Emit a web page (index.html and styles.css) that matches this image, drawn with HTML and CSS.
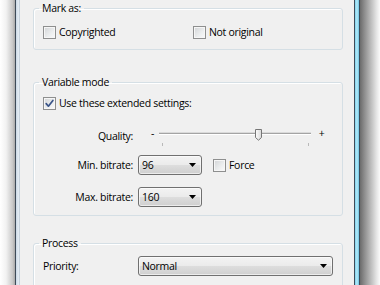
FILE: index.html
```html
<!DOCTYPE html>
<html lang="en">
<head>
<meta charset="utf-8">
<title>Encoder settings</title>
<link rel="stylesheet" href="styles.css">
</head>
<body>
<div class="screen">
  <div class="shadow-left"></div>
  <div class="edge-dark"></div>
  <div class="frame-left"></div>
  <main class="client">
    <fieldset class="group g-mark">
      <legend>Mark as:</legend>
      <div class="mark-row">
        <label class="check col-a"><span class="cb"></span>Copyrighted</label>
        <label class="check"><span class="cb"></span>Not original</label>
      </div>
    </fieldset>

    <fieldset class="group g-var">
      <legend>Variable mode</legend>
      <label class="check ext"><span class="cb"><svg class="tick" width="11" height="11" viewBox="0 0 11 11"><path d="M2.2 5.6 L4.4 8.2 L8.9 2.4" fill="none" stroke="#3a5488" stroke-width="1.7" stroke-linecap="round" stroke-linejoin="round"/></svg></span>Use these extended settings:</label>

      <div class="row r-quality">
        <span class="lbl">Quality:</span>
        <div class="slider">
          <span class="minus">-</span>
          <div class="track">
            <span class="tickmark t-start"></span>
            <span class="tickmark t-end"></span>
            <svg class="thumb" width="7" height="12" viewBox="0 0 7 12"><defs><linearGradient id="tg" x1="0" y1="0" x2="1" y2="0"><stop offset="0" stop-color="#fdfdfd"/><stop offset="1" stop-color="#d8d8d8"/></linearGradient></defs><path d="M0.5 0.5 H6.5 V8.5 L3.5 11.2 L0.5 8.5 Z" fill="url(#tg)" stroke="#767676"/></svg>
          </div>
          <span class="plus">+</span>
        </div>
      </div>

      <div class="row r-min">
        <span class="lbl">Min. bitrate:</span>
        <div class="combo c-small"><span>96</span><svg class="arrow" width="7" height="4" viewBox="0 0 7 4"><path d="M0 0H7L3.5 4Z" fill="#000"/></svg></div>
        <label class="check force"><span class="cb"></span>Force</label>
      </div>

      <div class="row r-max">
        <span class="lbl">Max. bitrate:</span>
        <div class="combo c-small"><span>160</span><svg class="arrow" width="7" height="4" viewBox="0 0 7 4"><path d="M0 0H7L3.5 4Z" fill="#000"/></svg></div>
      </div>
    </fieldset>

    <fieldset class="group g-proc">
      <legend>Process</legend>
      <div class="row r-prio">
        <span class="lbl lbl-left">Priority:</span>
        <div class="combo c-wide"><span>Normal</span><svg class="arrow" width="7" height="4" viewBox="0 0 7 4"><path d="M0 0H7L3.5 4Z" fill="#000"/></svg></div>
      </div>
    </fieldset>
  </main>
  <div class="edge-dark"></div>
  <div class="frame-right"></div>
  <div class="edge-dark"></div>
  <div class="shadow-right"></div>
</div>
</body>
</html>
```
FILE: styles.css
```css
html, body {
  margin: 0;
  padding: 0;
  height: 100%;
  overflow: hidden;
  background: #ffffff;
}

body {
  font-family: "Open Sans", "Noto Sans", sans-serif;
  font-size: 10.5px;
  line-height: 14px;
  letter-spacing: -0.3px;
  color: #000;
}

.screen {
  display: flex;
  height: 285px;
  width: 380px;
}

.shadow-left {
  width: 15px;
  flex: none;
  background: linear-gradient(to right, #ffffff 0%, #f2f2f2 40%, #c8c8c8 85%, #a9a9a9 100%);
}

.edge-dark {
  width: 1px;
  flex: none;
  background: #3e4b58;
}

.frame-left {
  width: 4px;
  flex: none;
  background: linear-gradient(to right, #c9d7e4, #e4edf5 60%, #b9c6d2);
}

.frame-right {
  width: 4px;
  flex: none;
  background: linear-gradient(to right, #7fd0ea, #b8ecfa 50%, #6cc3e2);
}

.shadow-right {
  flex: 1;
  background: linear-gradient(to right, #6b6b6b 0%, #8a8a8a 20%, #bdbdbd 55%, #e8e8e8 85%, #fafafa 100%);
}

.client {
  width: 334px;
  flex: none;
  background: #f0f0f0;
  display: flex;
  flex-direction: column;
}

.group {
  margin: 0 11px 0 13px;
  padding: 0 0 0 9px;
  border: 1px solid #d5dfe5;
  border-radius: 3px;
  box-shadow: inset 1px 1px 0 #ffffff;
  min-width: 0;
}

.group legend {
  margin-left: -4px;
  padding: 0 3px;
  line-height: 14px;
  height: 14px;
}

.g-mark {
  margin-top: 1px;
  padding-bottom: 10px;
}

.g-var {
  margin-top: 25px;
  padding-bottom: 8px;
}

.g-proc {
  margin-top: 20px;
  padding-bottom: 20px;
}

.check {
  display: flex;
  align-items: center;
  height: 14px;
  white-space: nowrap;
}

.cb {
  width: 11px;
  height: 11px;
  flex: none;
  margin-right: 3px;
  border: 1px solid #8e8f8f;
  background: linear-gradient(135deg, #d2d4d6 0%, #eceeef 60%, #fafafa 100%);
  box-shadow: inset 0 0 0 1px #f6f6f6;
  position: relative;
}

.tick {
  position: absolute;
  left: 0;
  top: 0;
}

.mark-row {
  display: flex;
  margin-top: 10px;
}

.col-a {
  width: 150px;
}

.ext {
  margin-top: 7px;
}

.row {
  display: flex;
  align-items: center;
  height: 20px;
  margin-left: -9px;
}

.lbl {
  width: 99px;
  margin-right: 5px;
  text-align: right;
  flex: none;
}

.lbl-left {
  text-align: left;
  padding-left: 9px;
  width: 90px;
}

.r-quality {
  margin-top: 16px;
}

.r-min {
  margin-top: 9px;
}

.r-max {
  margin-top: 12px;
}

.r-prio {
  margin-top: 6px;
}

.slider {
  display: flex;
  align-items: flex-start;
  align-self: stretch;
}

.minus {
  width: 5px;
  margin-left: 12px;
  text-align: center;
}

.plus {
  width: 7px;
  margin-left: 7px;
  text-align: center;
}

.track {
  position: relative;
  width: 152px;
  height: 1px;
  margin-top: 6px;
  margin-left: 4px;
  background: #a4a4a4;
  border-top: 1px solid #dadada;
  border-bottom: 1px solid #ffffff;
}

.thumb {
  position: absolute;
  left: 96px;
  top: -4px;
}

.tickmark {
  position: absolute;
  top: 10px;
  width: 1px;
  height: 3px;
  background: #b9b9b9;
}

.t-start {
  left: 3px;
}

.t-end {
  left: 149px;
}

.combo {
  box-sizing: border-box;
  height: 20px;
  display: flex;
  align-items: center;
  justify-content: space-between;
  padding: 0 5px 0 3px;
  border: 1px solid #707070;
  border-radius: 3px;
  background: linear-gradient(to bottom, #f3f3f3 0%, #ebebeb 48%, #dddddd 52%, #cfcfcf 100%);
  box-shadow: inset 0 0 0 1px rgba(255, 255, 255, 0.6);
}

.c-small {
  width: 64px;
}

.c-wide {
  width: 195px;
}

.force {
  margin-left: 11px;
}
```
